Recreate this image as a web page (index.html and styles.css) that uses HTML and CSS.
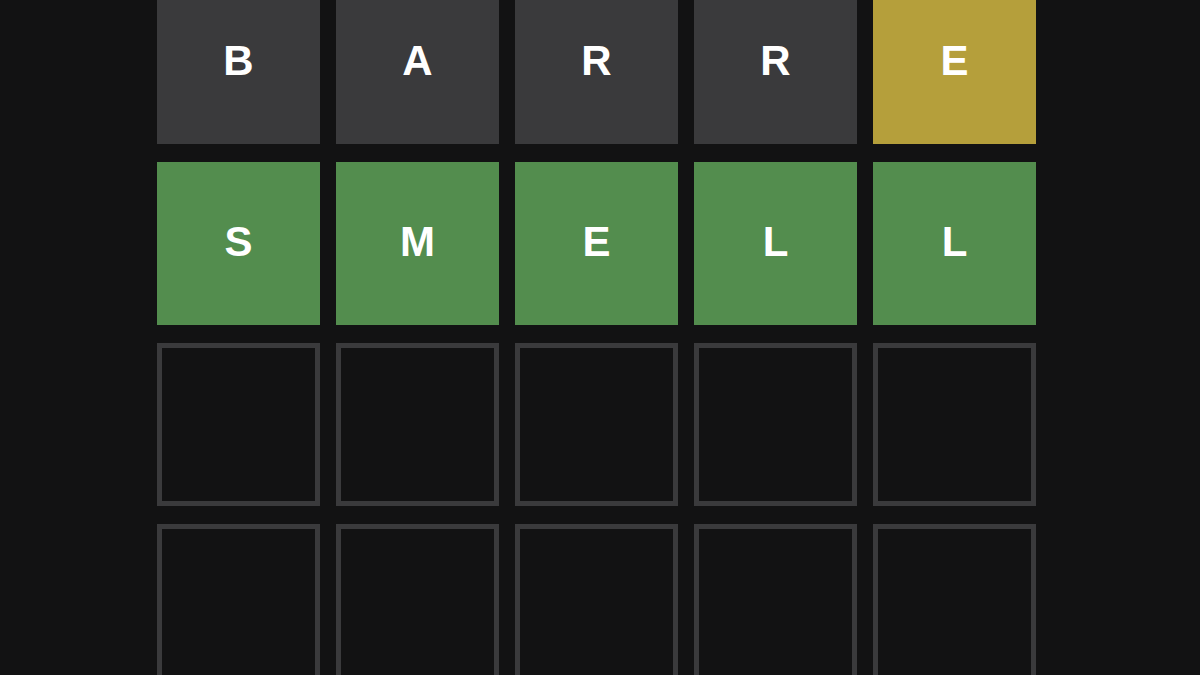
FILE: index.html
```html
<!DOCTYPE html>
<html lang="en">
<head>
  <meta charset="UTF-8">
  <title>Wordle</title>
  <link rel="stylesheet" href="styles.css">
</head>
<body>
  <div class="board">
    <div class="row">
      <div class="tile absent">B</div>
      <div class="tile absent">A</div>
      <div class="tile absent">R</div>
      <div class="tile absent">R</div>
      <div class="tile present">E</div>
    </div>
    <div class="row">
      <div class="tile correct">S</div>
      <div class="tile correct">M</div>
      <div class="tile correct">E</div>
      <div class="tile correct">L</div>
      <div class="tile correct">L</div>
    </div>
    <div class="row">
      <div class="tile empty"></div>
      <div class="tile empty"></div>
      <div class="tile empty"></div>
      <div class="tile empty"></div>
      <div class="tile empty"></div>
    </div>
    <div class="row">
      <div class="tile empty"></div>
      <div class="tile empty"></div>
      <div class="tile empty"></div>
      <div class="tile empty"></div>
      <div class="tile empty"></div>
    </div>
  </div>
</body>
</html>
```

FILE: styles.css
```css
html, body {
  height: 100%;
}
body {
  margin: 0;
  background: #121213;
  font-family: "Liberation Sans", Arial, sans-serif;
  overflow: hidden;
}
.board {
  display: flex;
  flex-direction: column;
  gap: 18px;
  padding-left: 157px;
  margin-top: -19px;
}
.row {
  display: flex;
  gap: 16px;
}
.tile {
  width: 163px;
  height: 163px;
  box-sizing: border-box;
  display: flex;
  align-items: center;
  justify-content: center;
  padding-bottom: 4px;
  color: #ffffff;
  font-size: 42px;
  font-weight: bold;
  line-height: 1;
}
.absent {
  background: #3a3a3c;
}
.present {
  background: #b59f3b;
}
.correct {
  background: #538d4e;
}
.empty {
  border: 5px solid #3a3a3c;
}
```
